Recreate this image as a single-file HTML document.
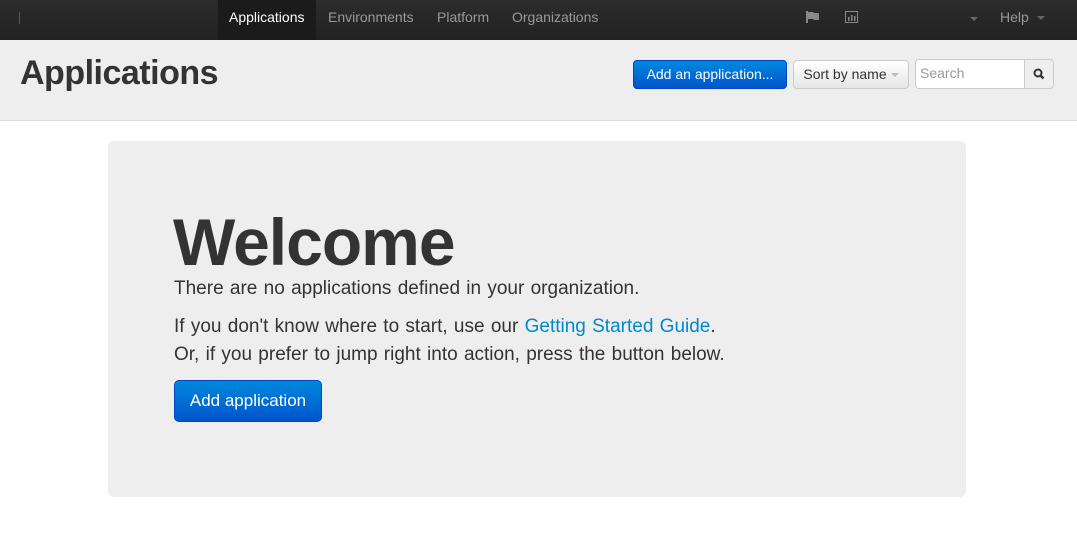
<!DOCTYPE html>
<html><head><style>
*{box-sizing:border-box;margin:0;padding:0}
body{width:1077px;height:542px;background:#fff;font-family:"Liberation Sans",Arial,sans-serif;position:relative;overflow:hidden;color:#333}
.nav{position:absolute;left:0;top:0;width:1077px;height:40px;background:linear-gradient(#2c2c2c,#222);}
.nav a{position:absolute;top:0;height:40px;line-height:35px;font-size:14px;color:#999}
.active{background:#1b1b1b;color:#fff!important;padding:0 11px}
.sub{position:absolute;top:40px;left:0;width:1077px;height:81px;background:#eee;border-bottom:1px solid #ddd}
h1{position:absolute;left:20px;top:54px;font-size:34px;font-weight:bold;color:#333;letter-spacing:-0.5px}
.btn{position:absolute;border-radius:4px;font-size:14px;text-align:center}
.blue{background:linear-gradient(#0088dd,#0055cc);color:#fff;border:1px solid #04c}
.well{position:absolute;left:108px;top:141px;width:858px;height:356px;background:#eee;border-radius:6px}
.caret{display:inline-block;border-top:4px solid #666;border-left:4px solid transparent;border-right:4px solid transparent;vertical-align:middle;margin-left:4px}
.txt{position:absolute;left:66px;font-size:19px;line-height:28px;word-spacing:1px}
</style></head><body>
<div class="nav">
<div style="position:absolute;left:19px;top:12px;width:1px;height:12px;background:#555"></div>
<a class="active" style="left:218px">Applications</a>
<a style="left:328px">Environments</a>
<a style="left:437px">Platform</a>
<a style="left:512px">Organizations</a>
<svg style="position:absolute;left:806px;top:11px" width="14" height="12"><rect x="0" y="0" width="2" height="12" fill="#888"/><path d="M2 1h5l1 1h5v7h-5l-1-1H2z" fill="#888"/></svg>
<svg style="position:absolute;left:845px;top:11px" width="13" height="12"><rect x="0.5" y="0.5" width="12" height="11" fill="none" stroke="#888"/><rect x="3" y="6" width="1.5" height="4" fill="#888"/><rect x="6" y="4" width="1.5" height="6" fill="#888"/><rect x="9" y="5" width="1.5" height="5" fill="#888"/></svg>
<span class="caret" style="position:absolute;left:966px;top:17px"></span>
<a style="left:1000px">Help <span class="caret"></span></a>
</div>
<div class="sub">
<h1 style="top:14px">Applications</h1>
<div class="btn blue" style="left:633px;top:20px;width:154px;height:29px;line-height:27px">Add an application...</div>
<div class="btn" style="left:793px;top:20px;width:116px;height:29px;line-height:27px;background:linear-gradient(#fff,#e6e6e6);border:1px solid #ccc;color:#333">Sort by name<span class="caret" style="border-top-color:#bbb"></span></div>
<div style="position:absolute;left:915px;top:19px;width:110px;height:30px;background:#fff;border:1px solid #ccc;border-radius:4px 0 0 4px;font-size:14px;color:#999;padding:5px 4px">Search</div>
<div style="position:absolute;left:1024px;top:19px;width:30px;height:30px;background:#eee;border:1px solid #ccc;border-radius:0 4px 4px 0"><svg width="28" height="28"><circle cx="13" cy="13" r="3.5" fill="none" stroke="#333" stroke-width="2"/><path d="M15.5 15.5l3 3" stroke="#333" stroke-width="2.5"/></svg></div>
</div>
<div class="well">
<div style="position:absolute;left:65px;top:63px;font-size:66px;font-weight:bold;letter-spacing:-1px;color:#333">Welcome</div>
<div class="txt" style="top:134px">There are no applications defined in your organization.</div>
<div class="txt" style="top:172px">If you don't know where to start, use our <span style="color:#08c">Getting Started Guide</span>.<br>Or, if you prefer to jump right into action, press the button below.</div>
<div class="btn blue" style="left:66px;top:239px;width:148px;height:42px;line-height:40px;font-size:17px;border-radius:5px">Add application</div>
</div>
</body></html>
